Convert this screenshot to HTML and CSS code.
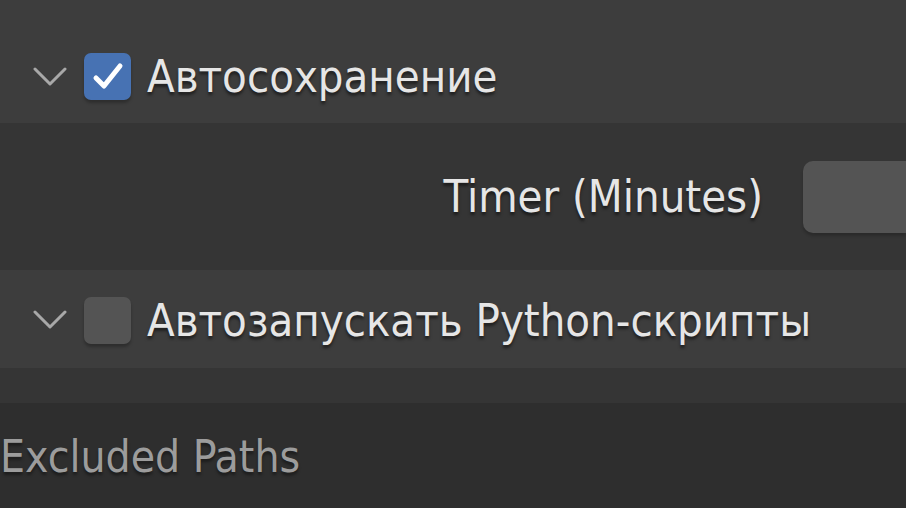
FILE: index.html
```html
<!DOCTYPE html>
<html lang="ru">
<head>
<meta charset="utf-8">
<title>Preferences</title>
<link rel="stylesheet" href="styles.css">
</head>
<body>
<div class="prefs">
  <div class="panel-header header-autosave">
    <svg class="chevron" viewBox="0 0 34 22" width="34" height="22"><path d="M2 3 L17 18 L32 3" fill="none" stroke="#a8a8a8" stroke-width="3" stroke-linecap="round" stroke-linejoin="round"/></svg>
    <span class="checkbox checked">
      <svg viewBox="0 0 47 47" width="47" height="47"><path d="M12 25 L20 33 L36 13" fill="none" stroke="#ffffff" stroke-width="5" stroke-linecap="round" stroke-linejoin="round"/></svg>
    </span>
    <span class="header-label">Автосохранение</span>
  </div>
  <div class="panel-body body-autosave">
    <div class="prop-row">
      <span class="prop-label">Timer (Minutes)</span>
      <span class="num-field"></span>
    </div>
  </div>
  <div class="panel-header header-python">
    <svg class="chevron" viewBox="0 0 34 22" width="34" height="22"><path d="M2 3 L17 18 L32 3" fill="none" stroke="#a8a8a8" stroke-width="3" stroke-linecap="round" stroke-linejoin="round"/></svg>
    <span class="checkbox"></span>
    <span class="header-label">Автозапускать Python-скрипты</span>
  </div>
  <div class="panel-body body-python"></div>
  <div class="section">
    <span class="section-label">Excluded Paths</span>
  </div>
</div>
</body>
</html>
```

FILE: styles.css
```css
html, body {
  margin: 0;
  padding: 0;
  background: #2e2e2e;
  overflow: hidden;
}
.prefs {
  width: 906px;
  height: 508px;
  display: flex;
  flex-direction: column;
  font-family: "DejaVu Sans Condensed", "DejaVu Sans", sans-serif;
  font-stretch: semi-condensed;
}
.panel-header {
  background: #3d3d3d;
  display: flex;
  align-items: center;
  box-sizing: border-box;
}
.header-autosave {
  height: 123px;
  padding: 30px 0 0 33px;
}
.header-python {
  height: 98px;
  padding: 2px 0 0 33px;
}
.chevron {
  display: block;
  flex: none;
}
.checkbox {
  width: 47px;
  height: 47px;
  margin-left: 17px;
  border-radius: 7px;
  background: #545454;
  flex: none;
  box-shadow: 0 3px 3px rgba(0,0,0,0.25);
}
.checkbox.checked {
  background: #4772b3;
}
.checkbox svg {
  display: block;
}
.header-label {
  margin-left: 16px;
  font-size: 45px;
  color: #e6e6e6;
  text-shadow: 0 3px 3px rgba(0,0,0,0.5);
  white-space: nowrap;
}
.panel-body {
  background: #353535;
}
.body-autosave {
  height: 147px;
  display: flex;
  flex-direction: column;
  justify-content: center;
}
.body-python {
  height: 35px;
}
.prop-row {
  display: flex;
  align-items: center;
  justify-content: flex-end;
  gap: 40px;
}
.prop-label {
  font-size: 45px;
  color: #e6e6e6;
  text-shadow: 0 3px 3px rgba(0,0,0,0.5);
  white-space: nowrap;
}
.num-field {
  width: 103px;
  height: 72px;
  background: #545454;
  border-radius: 10px 0 0 10px;
  box-shadow: 0 3px 3px rgba(0,0,0,0.2);
}
.section {
  flex: 1;
  background: #2e2e2e;
  padding: 28px 0 0 0;
}
.section-label {
  font-size: 44px;
  color: #9c9c9c;
  text-shadow: 0 3px 3px rgba(0,0,0,0.4);
  white-space: nowrap;
}
```
